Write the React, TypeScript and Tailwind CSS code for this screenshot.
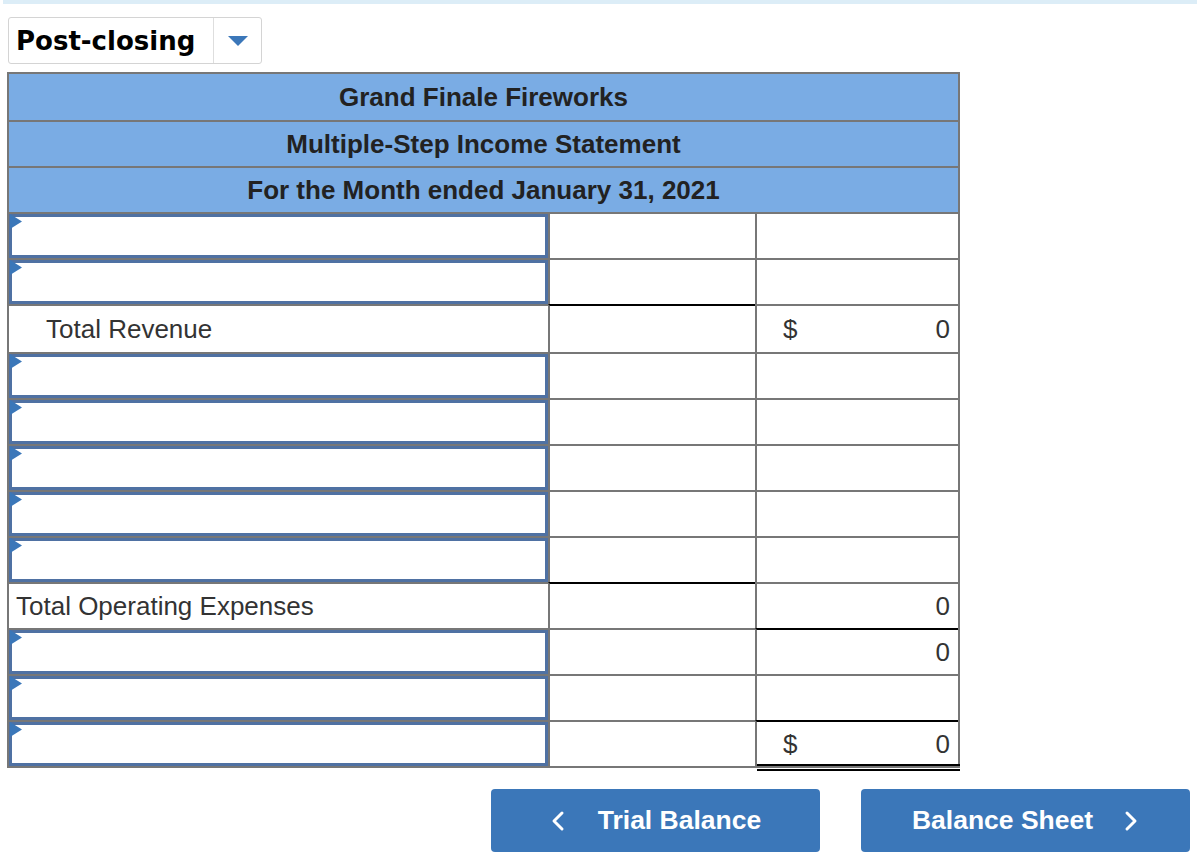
type Cell = {
  dollar?: boolean
  value?: string
  topBlack?: boolean
  doubleBottom?: boolean
}

type Row = {
  input?: boolean
  label?: string
  indent?: boolean
  tall?: boolean
  mid?: Cell
  right?: Cell
}

const rows: Row[] = [
  { input: true },
  { input: true },
  { label: "Total Revenue", indent: true, tall: true, mid: { topBlack: true }, right: { dollar: true, value: "0" } },
  { input: true },
  { input: true },
  { input: true },
  { input: true },
  { input: true },
  { label: "Total Operating Expenses", mid: { topBlack: true }, right: { value: "0" } },
  { input: true, right: { value: "0", topBlack: true } },
  { input: true },
  { input: true, right: { dollar: true, value: "0", topBlack: true, doubleBottom: true } },
]

const font = { fontFamily: '"Liberation Sans", Arial, sans-serif' }

function InputBox() {
  return (
    <div className="relative h-full w-full border-[3px] border-[#4f71a3] bg-white">
      <svg className="absolute -left-[2px] -top-[3px] z-10" width="12" height="15" viewBox="0 0 12 15">
        <polygon points="0,0 12,7.5 0,15" fill="#3b77b9" />
      </svg>
    </div>
  )
}

function AmountCell({ cell, wide }: { cell?: Cell; wide?: boolean }) {
  return (
    <div
      className={`relative flex items-center border-l-2 border-l-[#777] border-t-2 ${
        cell?.topBlack ? "border-t-black" : "border-t-[#777]"
      } ${wide ? "flex-1" : "w-[207px]"} pl-[26px] pr-[8px] text-[26px] text-[#333]`}
    >
      {cell?.dollar && <span>$</span>}
      {cell?.value && <span className="ml-auto">{cell.value}</span>}
      {cell?.doubleBottom && (
        <div className="absolute -bottom-[5px] left-0 right-[-2px] h-[7px] border-y-2 border-black" />
      )}
    </div>
  )
}

function Chevron({ dir }: { dir: "left" | "right" }) {
  return (
    <svg width="16" height="24" viewBox="0 0 16 24" fill="none" stroke="white" strokeWidth="3" strokeLinecap="round" strokeLinejoin="round">
      {dir === "left" ? <polyline points="12,4 4,12 12,20" /> : <polyline points="4,4 12,12 4,20" />}
    </svg>
  )
}

export default function App() {
  return (
    <div className="min-h-screen bg-white" style={font}>
      <div className="ml-[3px] h-[4px] bg-[#dcedf7]" />

      <div className="ml-[8px] mt-[13px] flex h-[47px] w-[254px] items-stretch rounded-[3px] border border-[#d4d4d4]">
        <div
          className="flex flex-1 items-center pl-[7px] pt-[1px] text-[26px] font-bold text-black"
          style={{ fontFamily: '"DejaVu Sans", Verdana, sans-serif' }}
        >
          Post-closing
        </div>
        <div className="flex w-[48px] items-center justify-center border-l border-[#dedede]">
          <svg width="20" height="10" viewBox="0 0 20 10">
            <polygon points="0,0 20,0 10,10" fill="#3b77b9" />
          </svg>
        </div>
      </div>

      <div className="ml-[7px] mt-[8px] w-[953px] border-2 border-[#777]">
        <div className="flex h-[46px] items-center justify-center bg-[#7aace4] text-[26px] font-bold text-[#222]">
          Grand Finale Fireworks
        </div>
        <div className="flex h-[46px] items-center justify-center border-t-2 border-[#777] bg-[#7aace4] text-[26px] font-bold text-[#222]">
          Multiple-Step Income Statement
        </div>
        <div className="flex h-[46px] items-center justify-center border-t-2 border-[#777] bg-[#7aace4] text-[26px] font-bold text-[#222]">
          For the Month ended January 31, 2021
        </div>

        {rows.map((row, i) => (
          <div key={i} className={`flex ${row.tall ? "h-[48px]" : "h-[46px]"}`}>
            <div className="w-[539px] border-t-2 border-[#777]">
              {row.input ? (
                <InputBox />
              ) : (
                <div
                  className={`flex h-full items-center text-[26px] text-[#333] ${
                    row.indent ? "pl-[37px]" : "pl-[7px]"
                  }`}
                >
                  {row.label}
                </div>
              )}
            </div>
            <AmountCell cell={row.mid} />
            <AmountCell cell={row.right} wide />
          </div>
        ))}
      </div>

      <div className="mt-[21px] flex gap-[41px] pl-[491px]">
        <button className="flex h-[63px] w-[329px] items-center justify-center gap-[32px] rounded-[4px] bg-[#3b77b9] text-[26.5px] font-bold text-white">
          <Chevron dir="left" />
          <span>Trial Balance</span>
        </button>
        <button className="flex h-[63px] w-[329px] items-center justify-center gap-[30px] rounded-[4px] bg-[#3b77b9] text-[26.5px] font-bold text-white">
          <span>Balance Sheet</span>
          <Chevron dir="right" />
        </button>
      </div>
    </div>
  )
}
